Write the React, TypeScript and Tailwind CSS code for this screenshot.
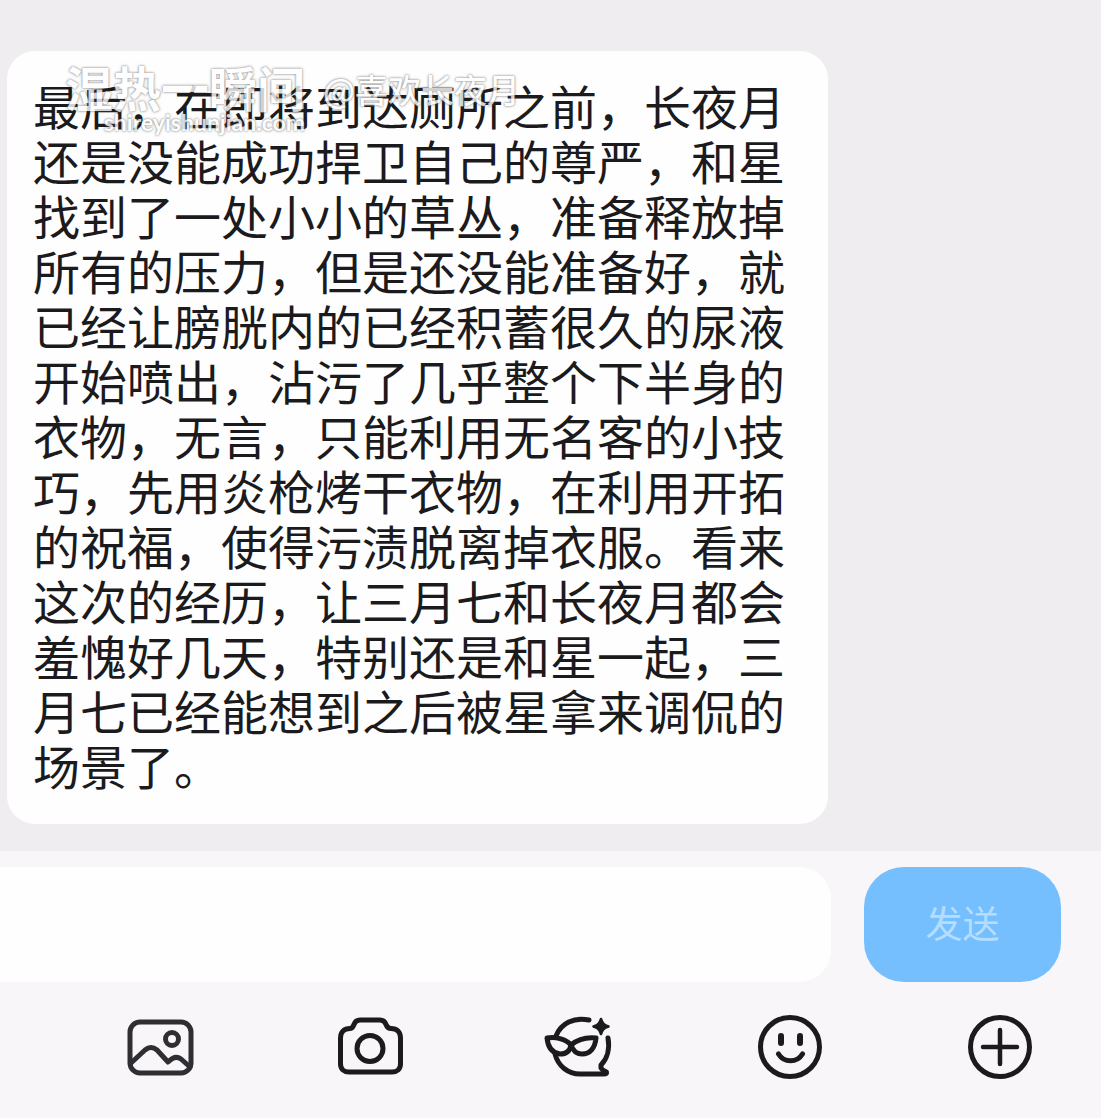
import type { ReactNode } from "react"

const message =
    "最后，在即将到达厕所之前，长夜月还是没能成功捍卫自己的尊严，和星找到了一处小小的草丛，准备释放掉所有的压力，但是还没能准备好，就已经让膀胱内的已经积蓄很久的尿液开始喷出，沾污了几乎整个下半身的衣物，无言，只能利用无名客的小技巧，先用炎枪烤干衣物，在利用开拓的祝福，使得污渍脱离掉衣服。看来这次的经历，让三月七和长夜月都会羞愧好几天，特别还是和星一起，三月七已经能想到之后被星拿来调侃的场景了。"

const tools: { label: string; icon: ReactNode }[] = [
    {
        label: "图片",
        icon: (
            <g stroke="#2f2e32">
                <rect x="3" y="8" width="61" height="51" rx="10" />
                <circle cx="45" cy="25" r="6.5" />
                <path d="M4 49L18 36Q24 31 30 36L41 48Q48 40.500 54 45L63 53" />
            </g>
        ),
    },
    {
        label: "拍照",
        icon: (
            <>
                <path d="M13 14.500C15 14.500 16 13 17 10.500C18 7.500 20 6 23 6H43C46 6 48 7.500 49 10.500C50 13 51 14.500 54 14.500C60 14.500 63.500 18 63.500 24V50C63.500 55 60 58 55 58H12C7 58 3.500 55 3.500 50V24C3.500 18 7 14.500 13 14.500Z" />
                <circle cx="33" cy="34.500" r="13" />
            </>
        ),
    },
    {
        label: "互动",
        icon: (
            <>
                <path d="M9 22C14 9 27 3 42 6" />
                <path d="M61 24C63 35 60 45 54 51V54Q55 56 59.500 58Q60 60 57 60H33C21 60 11 52 8 40" />
                <path d="M0 24C9 22 20 26 24 31C23 37 19 40 13 40C5 39 1 34 0 24Z" />
                <path d="M24 31C30 26 39 23 49 24C48 34 43 40 35 40C29 40 26 37 24 31Z" />
                <path
                    d="M54 5C55.500 9.500 57 11 61.500 12.500C57 14 55.500 15.500 54 20C52.500 15.500 51 14 46.500 12.500C51 11 52.500 9.500 54 5Z"
                    fill="currentColor"
                    strokeWidth="2.5"
                />
            </>
        ),
    },
    {
        label: "表情",
        icon: (
            <>
                <circle cx="33" cy="33" r="29.5" />
                <path d="M24 22V29M43 22V29" strokeWidth="6" />
                <path d="M21.500 40C27 49 40 49 45.500 40" />
            </>
        ),
    },
    {
        label: "更多",
        icon: (
            <>
                <circle cx="33" cy="33" r="29.5" />
                <path d="M33 16V50M16 33H50" strokeWidth="4.5" />
            </>
        ),
    },
]

function Watermark() {
    return (
        <div className="pointer-events-none absolute left-[58px] top-[11px] flex items-start gap-[18px] whitespace-nowrap text-white opacity-80 [text-shadow:0_0_2px_rgba(80,80,80,0.8),0_0_3px_rgba(80,80,80,0.5)]">
            <div className="flex flex-col items-end">
                <span className="text-[48px] font-bold leading-[48px]">湿热一瞬间</span>
                <span className="font-[Lato,sans-serif] text-[23px] font-bold leading-[24px]">shireyishunjian.com</span>
            </div>
            <span className="pt-[3px] text-[33px] font-medium leading-[48px]">@喜欢长夜月</span>
        </div>
    )
}

export default function App() {
    return (
        <div className="flex min-h-screen flex-col bg-[#efedf0] font-['Noto_Sans_CJK_SC',sans-serif] text-[#1b1a1d]">
            <main className="flex-1 px-[7px] pb-[27px] pt-[51px]">
                <article className="relative w-fit max-w-[821px] rounded-[28px] bg-[#fefefe] pb-8 pl-[26px] pr-[43px] pt-[26px]">
                    <p className="text-[47px] leading-[55px]">{message}</p>
                    <Watermark />
                </article>
            </main>

            <footer className="bg-[#f8f6f9] pb-[38px] pt-4">
                <form className="flex gap-[33px] pr-10" onSubmit={(e) => e.preventDefault()}>
                    <input
                        type="text"
                        aria-label="消息"
                        className="h-[115px] min-w-0 flex-1 rounded-r-[32px] bg-[#fefefe] px-6 text-[47px] outline-none"
                    />
                    <button type="submit" className="h-[115px] w-[197px] rounded-[40px] bg-[#76bfff] pb-1 text-[37px] text-[#b4deff]">
                        发送
                    </button>
                </form>
                <div className="flex justify-between pl-[127px] pr-[68px] pt-8">
                    {tools.map((tool) => (
                        <button key={tool.label} type="button" aria-label={tool.label}>
                            <svg
                                viewBox="0 0 66 66"
                                className="size-[66px] overflow-visible"
                                fill="none"
                                stroke="currentColor"
                                strokeWidth="5"
                                strokeLinecap="round"
                                strokeLinejoin="round"
                            >
                                {tool.icon}
                            </svg>
                        </button>
                    ))}
                </div>
            </footer>
        </div>
    )
}
